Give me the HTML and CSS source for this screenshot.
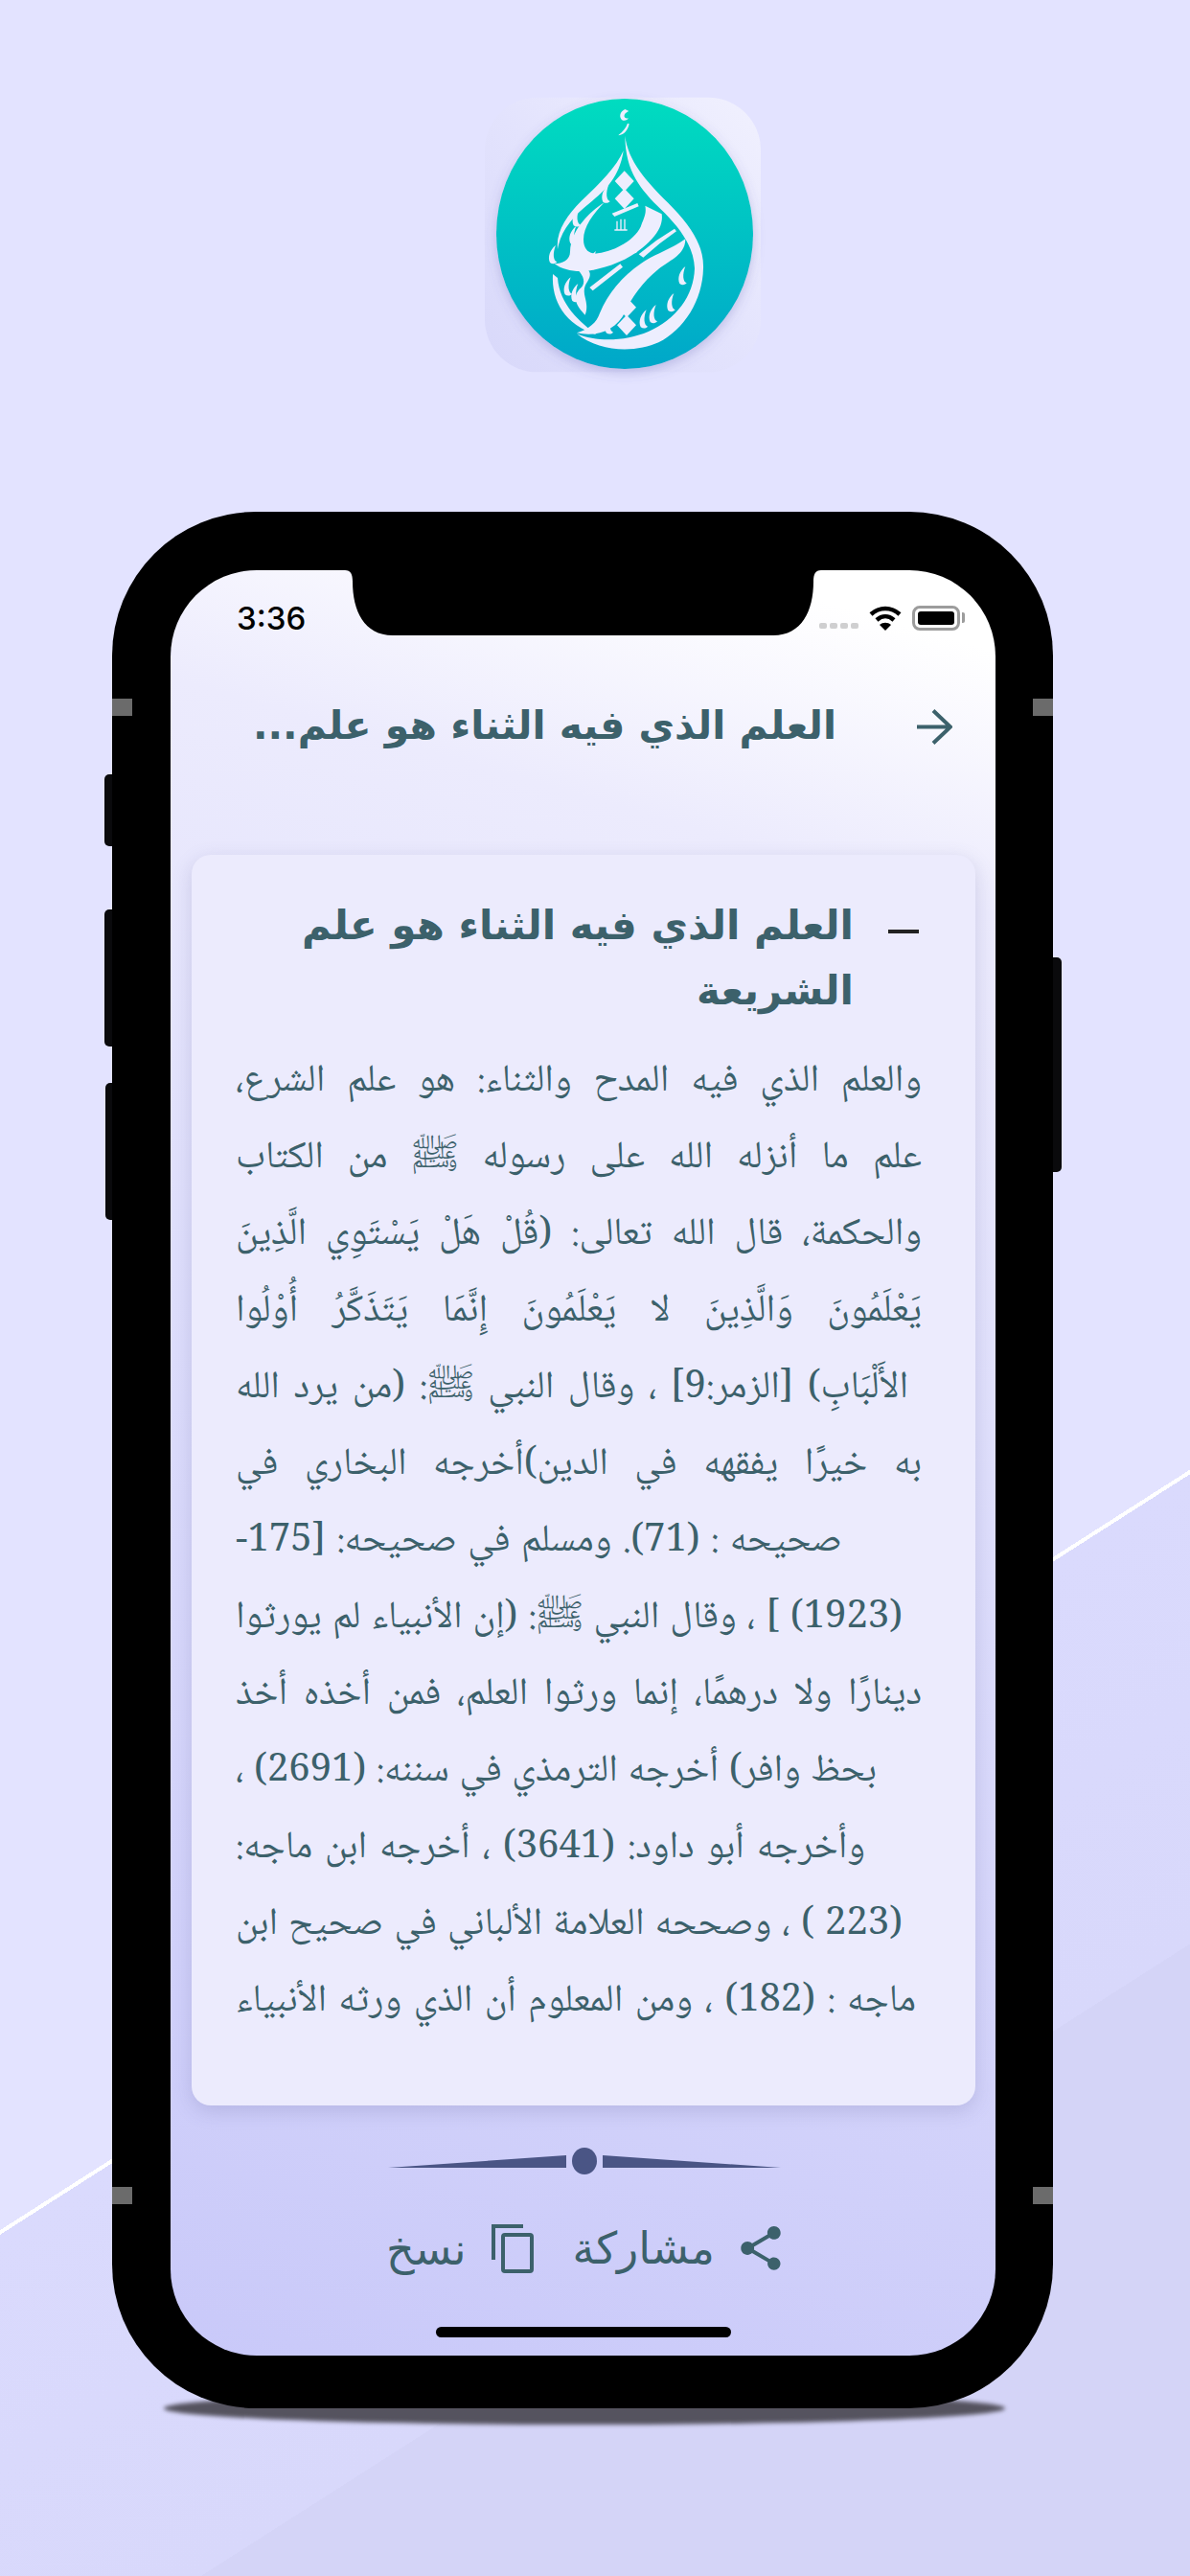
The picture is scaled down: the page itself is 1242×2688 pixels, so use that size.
FILE: index.html
```html
<!DOCTYPE html>
<html lang="ar">
<head>
<meta charset="utf-8">
<title>خير أمة</title>
<link rel="stylesheet" href="styles.css">
</head>
<body>
<div class="page">
  <svg class="logo" viewBox="0 0 1020 990" xmlns="http://www.w3.org/2000/svg" aria-label="logo">
    <defs>
      <linearGradient id="tile" x1="1" y1="0" x2="0" y2="1">
        <stop offset="0" stop-color="#f1f1fe"/>
        <stop offset=".5" stop-color="#e3e3fd"/>
        <stop offset="1" stop-color="#d8d8fa"/>
      </linearGradient>
      <linearGradient id="disc" x1="0" y1="0" x2="0" y2="1">
        <stop offset="0" stop-color="#00dcc0"/>
        <stop offset="1" stop-color="#00a7c9"/>
      </linearGradient>
      <filter id="discShadow" x="-15%" y="-15%" width="130%" height="130%">
        <feDropShadow dx="0" dy="12" stdDeviation="18" flood-color="#5a5aa8" flood-opacity=".28"/>
      </filter>
      <path id="tick" d="M2 0 C-16 14 -24 36 -16 54 C-8 60 2 58 6 52 C-6 48 -8 24 2 0 Z"/>
      <path id="gem" d="M0 -32 L30 0 L0 32 L-30 0 Z"/>
    </defs>
    <rect x="78" y="65" width="864" height="860" rx="165" fill="url(#tile)"/>
    <ellipse cx="516" cy="492" rx="402" ry="423" fill="url(#disc)" filter="url(#discShadow)"/>
    <g fill="#edeefe">
      <path d="M517 102 C503 108 497 124 506 134 C512 140 524 138 528 130 C519 132 513 128 515 120 C517 114 525 110 529 108 Z M497 182 C510 172 520 160 525 146 L530 148 C526 168 514 182 497 184 Z"/>
      <path d="M517 185 C527 265 582 325 652 395 C722 465 765 530 762 600 C760 700 702 792 622 832 C552 864 438 864 366 805 C430 832 520 828 590 798 C676 760 732 688 735 600 C732 530 688 472 628 414 C568 354 518 300 517 185 Z"/>
      <path d="M512 232 C490 282 440 334 380 389 C335 434 300 484 306 540 C316 480 356 436 406 396 C456 356 500 314 512 232 Z"/>
      <path d="M291 618 C286 704 330 776 428 808 C376 768 312 714 306 630 Z"/>
      <path d="M296 585 C330 612 385 614 430 602 C500 587 562 552 602 507 C625 482 636 456 632 430 L580 404 C586 430 572 450 566 470 C546 510 490 545 432 553 C402 557 387 538 387 510 C387 470 417 430 452 394 C396 430 345 490 345 548 C345 574 320 585 296 585 Z"/>
      <path d="M706 508 C706 556 662 572 622 602 C572 642 537 692 517 737 C491 792 430 817 366 802 C404 790 428 770 438 740 C463 680 508 624 568 584 C610 555 662 540 706 508 Z"/>
      <path d="M560 556 L616 512 L672 476 L678 484 L626 522 L574 566 Z"/>
      <path d="M476 428 L556 396 L560 406 L484 438 Z M406 660 L502 586 L510 596 L416 670 Z"/>
      <path d="M370 606 C388 592 414 604 406 628 C400 646 386 652 390 682 C394 702 402 722 392 746 C368 720 346 690 380 660 C394 646 388 624 370 606 Z"/>
      <use href="#gem" x="515" y="327"/>
      <use href="#gem" x="515" y="382"/>
      <use href="#gem" x="522" y="722"/>
      <use href="#gem" x="522" y="778"/>
      <use href="#tick" x="464" y="338"/>
      <use href="#tick" x="372" y="412"/>
      <use href="#tick" x="362" y="468"/>
      <use href="#tick" x="298" y="528"/>
      <use href="#tick" x="345" y="628"/>
      <use href="#tick" x="368" y="648"/>
      <use href="#tick" x="424" y="546"/>
      <use href="#tick" x="704" y="594"/>
      <use href="#tick" x="668" y="678"/>
      <use href="#tick" x="474" y="748"/>
      <use href="#tick" x="582" y="730"/>
      <use href="#tick" x="612" y="714"/>
      <path d="M490 452 h4 v28 h-4 Z M502 446 h4 v34 h-4 Z M514 446 h4 v34 h-4 Z M484 478 h40 v4 h-40 Z"/>
      <path d="M526 552 C540 544 552 544 556 546 L552 552 C544 552 536 556 532 560 Z"/>
    </g>
  </svg>

  <div class="phone">
    <span class="side-btn vol-mute"></span>
    <span class="side-btn vol-up"></span>
    <span class="side-btn vol-down"></span>
    <span class="side-btn power"></span>
    <span class="band band-lt"></span>
    <span class="band band-rt"></span>
    <span class="band band-lb"></span>
    <span class="band band-rb"></span>

    <div class="screen">
      <svg class="notch" viewBox="0 0 497 68" xmlns="http://www.w3.org/2000/svg" aria-hidden="true">
        <path d="M0 0 C6 0 8 4 8 12 C8 42 20 68 50 68 H447 C477 68 489 42 489 12 C489 4 491 0 497 0 Z"/>
      </svg>

      <div class="status">
        <span class="time">3:36</span>
        <div class="status-icons">
          <span class="signal"><i></i><i></i><i></i><i></i></span>
          <svg class="wifi" viewBox="0 0 34 26" xmlns="http://www.w3.org/2000/svg" aria-hidden="true">
            <path d="M2 9 C11 1 23 1 32 9" fill="none" stroke="#000" stroke-width="4.5"/>
            <path d="M8 15 C13.5 10 20.5 10 26 15" fill="none" stroke="#000" stroke-width="4.5"/>
            <path d="M17 26 L11 20 C14.5 17 19.5 17 23 20 Z"/>
          </svg>
          <span class="battery"><i></i></span>
        </div>
      </div>

      <header class="topbar" dir="rtl">
        <svg class="arrow" viewBox="0 0 37 37" xmlns="http://www.w3.org/2000/svg" aria-hidden="true">
          <path d="M0 18.5 H35 M17 1.5 L35 18.5 L17 35.5" fill="none" stroke="#3c616b" stroke-width="4"/>
        </svg>
        <h1 class="title">العلم الذي فيه الثناء هو علم...</h1>
      </header>

      <main class="card">
        <div class="heading" dir="rtl">
          <span class="dash"></span>
          <h2>العلم الذي فيه الثناء هو علم الشريعة</h2>
        </div>
        <div class="body-text" dir="rtl">
          <p class="line">والعلم الذي فيه المدح والثناء: هو علم الشرع،</p>
          <p class="line">علم ما أنزله الله على رسوله ﷺ من الكتاب</p>
          <p class="line">والحكمة، قال الله تعالى: (قُلْ هَلْ يَسْتَوِي الَّذِينَ</p>
          <p class="line">يَعْلَمُونَ وَالَّذِينَ لا يَعْلَمُونَ إِنَّمَا يَتَذَكَّرُ أُوْلُوا</p>
          <p class="line in-14">الأَلْبَابِ) [الزمر:9] ، وقال النبي ﷺ: (من يرد الله</p>
          <p class="line">به خيرًا يفقهه في الدين)أخرجه البخاري في</p>
          <p class="line in-83">صحيحه : (71). ومسلم في صحيحه: [175-</p>
          <p class="line in-20">(1923) ] ، وقال النبي ﷺ: (إن الأنبياء لم يورثوا</p>
          <p class="line">دينارًا ولا درهمًا، إنما ورثوا العلم، فمن أخذه أخذ</p>
          <p class="line in-47">بحظ وافر) أخرجه الترمذي في سننه: (2691) ،</p>
          <p class="line in-59">وأخرجه أبو داود: (3641) ، أخرجه ابن ماجه:</p>
          <p class="line in-20">(223 ) ، وصححه العلامة الألباني في صحيح ابن</p>
          <p class="line in-6">ماجه : (182) ، ومن المعلوم أن الذي ورثه الأنبياء</p>
        </div>
      </main>

      <svg class="ornament" viewBox="0 0 410 28" xmlns="http://www.w3.org/2000/svg" aria-hidden="true">
        <path d="M0 21 L186 8 V21 Z M224 8 L410 21 H224 Z" fill="#4a5585"/>
        <ellipse cx="205" cy="14" rx="13" ry="14" fill="#4a5585"/>
      </svg>

      <div class="actions" dir="rtl">
        <button class="action share-action">
          <svg class="share-icon" viewBox="3 2 18 20" xmlns="http://www.w3.org/2000/svg" aria-hidden="true">
            <path d="M18 16.08c-.76 0-1.44.3-1.96.77L8.91 12.7c.05-.23.09-.46.09-.7s-.04-.47-.09-.7l7.05-4.11c.54.5 1.25.81 2.04.81 1.66 0 3-1.34 3-3s-1.34-3-3-3-3 1.34-3 3c0 .24.04.47.09.7L8.04 9.81C7.5 9.31 6.79 9 6 9c-1.66 0-3 1.34-3 3s1.34 3 3 3c.79 0 1.5-.31 2.04-.81l7.12 4.16c-.05.21-.08.43-.08.65 0 1.61 1.31 2.92 2.92 2.92 1.61 0 2.92-1.31 2.92-2.92s-1.31-2.92-2.92-2.92z"/>
          </svg>
          <span>مشاركة</span>
        </button>
        <button class="action copy-action">
          <svg class="copy-icon" viewBox="0 0 44 51" xmlns="http://www.w3.org/2000/svg" aria-hidden="true">
            <path d="M2 37 V2 H33" fill="none" stroke="#3c616b" stroke-width="4"/>
            <rect x="12" y="11" width="30" height="38" rx="2" fill="none" stroke="#3c616b" stroke-width="4"/>
          </svg>
          <span>نسخ</span>
        </button>
      </div>

      <div class="home-bar"></div>
    </div>
  </div>
</div>
</body>
</html>
```

FILE: styles.css
```css
* { box-sizing: border-box; }
html, body { margin: 0; padding: 0; }
body { width: 1242px; height: 2688px; overflow: hidden; font-family: "DejaVu Sans", sans-serif; }

.page {
  isolation: isolate;
  width: 1242px;
  height: 2688px;
  overflow: hidden;
  padding-top: 80px;
  background: linear-gradient(147.42deg,
    #e3e3ff 0, #e3e3ff 1961px,
    #fff 1961px, #fff 1965px,
    #dadafd 1965px, #d8d8fb 2378px,
    #d4d4f7 2378px, #d4d4f7 100%);
}

.logo { display: block; width: 340px; height: 330px; margin-left: 480px; }

.phone {
  position: relative;
  width: 982px;
  height: 1979px;
  margin: 124px 0 0 117px;
  padding: 61px 60px 55px 61px;
  background: #000;
  border-radius: 150px;
}
.phone::after {
  content: "";
  position: absolute;
  z-index: -1;
  left: 54px;
  right: 50px;
  bottom: -17px;
  height: 34px;
  border-radius: 50%;
  background: #55535f;
  filter: blur(2px);
}

.side-btn { position: absolute; background: #0a0a0c; border-radius: 5px 0 0 5px; }
.vol-mute { left: -8px; top: 274px; width: 8px; height: 75px; }
.vol-up { left: -8px; top: 415px; width: 8px; height: 143px; }
.vol-down { left: -7px; top: 596px; width: 7px; height: 143px; }
.power { right: -9px; top: 465px; width: 9px; height: 224px; border-radius: 0 5px 5px 0; }

.band { position: absolute; width: 21px; height: 18px; background: #6b6b6b; }
.band-lt { left: 0; top: 195px; }
.band-rt { right: 0; top: 195px; }
.band-lb { left: 0; top: 1748px; }
.band-rb { right: 0; top: 1748px; }

.screen {
  position: relative;
  height: 1863px;
  display: flex;
  flex-direction: column;
  overflow: hidden;
  border-radius: 90px;
  background: linear-gradient(196deg, #fff 4%, #ecebfd 17%, #dfdffc 45%, #c9c9f9 100%);
}

.notch { position: absolute; left: 182px; top: 0; width: 497px; height: 68px; }

.status {
  height: 68px;
  padding: 32px 31px 0 69px;
  display: flex;
  justify-content: space-between;
  align-items: flex-start;
}
.time { font: 500 33px/36px Inter, "Liberation Sans", sans-serif; color: #000; }
.status-icons { display: flex; align-items: center; gap: 11px; height: 36px; }
.signal { display: flex; gap: 3px; margin-top: 16px; }
.signal i { width: 8px; height: 6px; border-radius: 2px; background: #cfcfd0; }
.wifi { width: 34px; height: 26px; }
.battery {
  position: relative;
  width: 50px;
  height: 26px;
  padding: 3px;
  border: 3px solid #9c9c9c;
  border-radius: 8px;
  margin-right: 6px;
}
.battery i { display: block; height: 100%; background: #000; border-radius: 3px; }
.battery::after {
  content: "";
  position: absolute;
  right: -8px;
  top: 4px;
  width: 3px;
  height: 11px;
  background: #9c9c9c;
  border-radius: 0 2px 2px 0;
}

.topbar {
  height: 229px;
  padding: 70px 45px 0 0;
  display: flex;
  align-items: flex-start;
  gap: 84px;
}
.arrow { width: 37px; height: 37px; margin-top: 7px; flex: none; }
.title { margin: 0; font-size: 41px; line-height: 48px; font-weight: 700; color: #3c616b; white-space: nowrap; }

.card {
  width: 818px;
  height: 1305px;
  margin-left: 22px;
  padding: 40px 56px 0 46px;
  flex: none;
  background: #ecebfd;
  border-radius: 20px;
  box-shadow: 0 6px 20px rgba(90, 90, 150, .22);
}
.heading { display: flex; gap: 36px; align-items: flex-start; height: 157px; padding-right: 3px; }
.dash { flex: none; width: 32px; height: 4px; margin-top: 38px; background: #222; }
.heading h2 { margin: 0; width: 600px; font-size: 42px; line-height: 68px; font-weight: 700; color: #3c616b; }

.body-text { color: #3c616b; font-family: "Noto Naskh Arabic", "DejaVu Sans", sans-serif; font-size: 40px; line-height: 80px; }
.line { margin: 0; white-space: nowrap; text-align: justify; text-align-last: justify; }
.in-6 { padding-right: 6px; }
.in-14 { padding-right: 14px; }
.in-20 { padding-right: 20px; }
.in-47 { padding-right: 47px; }
.in-59 { padding-right: 59px; }
.in-83 { padding-right: 83px; }

.ornament { display: block; width: 410px; height: 28px; margin: 44px 0 0 227px; flex: none; }

.actions { display: flex; gap: 41px; padding-right: 224px; margin-top: 52px; height: 56px; align-items: flex-start; }
.action {
  display: flex;
  align-items: center;
  padding: 0;
  border: 0;
  background: none;
  font: 400 46px/50px "DejaVu Sans", sans-serif;
  color: #3c616b;
}
.share-action { gap: 27px; }
.copy-action { gap: 26px; }
.share-icon { width: 42px; height: 46px; fill: #3c616b; }
.copy-icon { width: 44px; height: 51px; }

.home-bar { width: 308px; height: 11px; margin: 51px 0 0 277px; background: #000; border-radius: 6px; flex: none; }
```
